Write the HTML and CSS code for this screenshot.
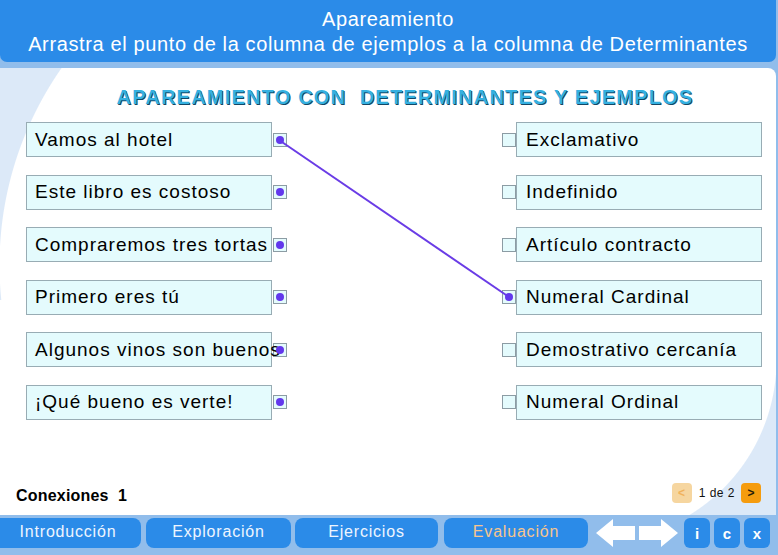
FILE: index.html
```html
<!DOCTYPE html>
<html lang="es">
<head>
<meta charset="utf-8">
<title>Apareamiento</title>
<link rel="stylesheet" href="styles.css">
</head>
<body>
<div class="app">
  <header class="top">
    <div class="top-title">Apareamiento</div>
    <div class="top-sub">Arrastra el punto de la columna de ejemplos a la columna de Determinantes</div>
  </header>

  <main class="panel">
    <h1 class="heading">APAREAMIENTO CON&nbsp; DETERMINANTES Y EJEMPLOS</h1>

    <div class="board">
      <ul class="col col-left">
        <li class="item"><span class="box">Vamos al hotel</span><span class="port"><i class="dot"></i></span></li>
        <li class="item"><span class="box">Este libro es costoso</span><span class="port"><i class="dot"></i></span></li>
        <li class="item"><span class="box">Compraremos tres tortas</span><span class="port"><i class="dot"></i></span></li>
        <li class="item"><span class="box">Primero eres tú</span><span class="port"><i class="dot"></i></span></li>
        <li class="item"><span class="box">Algunos vinos son buenos</span><span class="port"><i class="dot"></i></span></li>
        <li class="item"><span class="box">¡Qué bueno es verte!</span><span class="port"><i class="dot"></i></span></li>
      </ul>
      <ul class="col col-right">
        <li class="item"><span class="port"></span><span class="box">Exclamativo</span></li>
        <li class="item"><span class="port"></span><span class="box">Indefinido</span></li>
        <li class="item"><span class="port"></span><span class="box">Artículo contracto</span></li>
        <li class="item"><span class="port"><i class="dot"></i></span><span class="box">Numeral Cardinal</span></li>
        <li class="item"><span class="port"></span><span class="box">Demostrativo cercanía</span></li>
        <li class="item"><span class="port"></span><span class="box">Numeral Ordinal</span></li>
      </ul>
    </div>

    <svg class="wire" width="776" height="447" viewBox="0 0 776 447">
      <line x1="279" y1="72" x2="509" y2="229" stroke="#6a3ce6" stroke-width="2"/>
    </svg>

    <footer class="status">
      <div class="count">Conexiones&nbsp; 1</div>
      <div class="pager">
        <span class="pg-btn pg-prev">&lt;</span>
        <span class="pg-text">1 de 2</span>
        <span class="pg-btn pg-next">&gt;</span>
      </div>
    </footer>
  </main>

  <nav class="bar">
    <span class="tab tab-1">Introducción</span>
    <span class="tab tab-2">Exploración</span>
    <span class="tab tab-3">Ejercicios</span>
    <span class="tab tab-4 active">Evaluación</span>
    <span class="arrows">
      <svg width="84" height="30" viewBox="0 0 84 30">
        <path d="M1 15 L18 1 L18 8 L40 8 L40 22 L18 22 L18 29 Z" fill="#ffffff"/>
        <path d="M83 15 L66 1 L66 8 L44 8 L44 22 L66 22 L66 29 Z" fill="#ffffff"/>
      </svg>
    </span>
    <span class="sq">i</span>
    <span class="sq">c</span>
    <span class="sq">x</span>
  </nav>
</div>
</body>
</html>
```

FILE: styles.css
```css
* { box-sizing: border-box; }

html, body {
  margin: 0;
  padding: 0;
}

body {
  width: 778px;
  height: 555px;
  overflow: hidden;
  background: #91bdeb;
  font-family: "Liberation Sans", Arial, sans-serif;
}

.app {
  width: 778px;
  height: 555px;
  display: flex;
  flex-direction: column;
}

.top {
  height: 62px;
  width: 776px;
  background: #2b8be8;
  border-radius: 0 0 7px 7px;
  color: #ffffff;
  text-align: center;
  font-size: 20px;
  line-height: 25px;
  letter-spacing: 0.63px;
  padding-top: 7px;
}

.panel {
  position: relative;
  margin-top: 6px;
  width: 776px;
  height: 447px;
  border-radius: 0 8px 0 0;
  background:
    radial-gradient(circle 344px at 343px 197px, #ffffff 343px, #dce9f8 344px) left top / 400px 232px no-repeat,
    radial-gradient(circle 182px at 9px -15px, #ffffff 181px, #dce9f8 182px) right bottom / 190px 140px no-repeat,
    #ffffff;
  display: flex;
  flex-direction: column;
}

.heading {
  margin: 0;
  padding: 17px 0 0 34px;
  text-align: center;
  font-size: 20px;
  line-height: 24px;
  font-weight: bold;
  color: #35b0e0;
  text-shadow: 1px 1px 0 #124866;
  letter-spacing: 1.2px;
}

.board {
  margin-top: 13px;
  display: flex;
  justify-content: space-between;
  padding: 0 14px 0 26px;
}

.col {
  list-style: none;
  margin: 0;
  padding: 0;
  display: flex;
  flex-direction: column;
  gap: 17.6px;
}

.item {
  display: flex;
  align-items: center;
  height: 35px;
}

.box {
  position: relative;
  z-index: 1;
  display: flex;
  align-items: center;
  height: 35px;
  background: #e4fbfd;
  border: 1px solid #98acb4;
  color: #000000;
  font-size: 19px;
  letter-spacing: 1px;
  padding-left: 8px;
  white-space: nowrap;
}

.col-left .box { width: 246px; }
.col-right .box { width: 246px; padding-left: 9px; }

.port {
  width: 14px;
  height: 14px;
  border: 1px solid #8c9ca4;
  background: #e4fbfd;
  display: flex;
  align-items: center;
  justify-content: center;
}

.col-left .port { margin-left: 1px; }

.dot {
  position: relative;
  z-index: 3;
  width: 8px;
  height: 8px;
  border-radius: 50%;
  background: #6238ec;
}

.wire {
  position: absolute;
  left: 0;
  top: 0;
  z-index: 2;
  pointer-events: none;
}

.status {
  margin-top: auto;
  display: flex;
  justify-content: space-between;
  align-items: center;
  padding: 0 15px 10px 16px;
}

.count {
  font-size: 16px;
  font-weight: bold;
  color: #000;
  letter-spacing: 0.2px;
  padding-top: 6px;
}

.pager {
  display: flex;
  align-items: center;
}

.pg-btn {
  width: 20px;
  height: 20px;
  border-radius: 4px;
  display: flex;
  align-items: center;
  justify-content: center;
  font-size: 12px;
  font-weight: bold;
}

.pg-prev { background: #f6d6a0; color: #f1b25c; }
.pg-next { background: #f59c0f; color: #2a1c08; }

.pg-text {
  font-size: 12px;
  color: #111;
  letter-spacing: 0.5px;
  margin: 0 6px 0 7px;
}

.bar {
  flex: 1;
  display: flex;
  align-items: flex-start;
  padding-top: 3px;
}

.tab {
  height: 30px;
  border-radius: 8px;
  background: #2b8be8;
  color: #eef5ff;
  font-size: 16px;
  letter-spacing: 0.8px;
  display: flex;
  align-items: center;
  justify-content: center;
  padding-bottom: 2px;
}

.tab-1 { width: 141px; border-radius: 0 8px 8px 0; padding-right: 5px; }
.tab-2 { width: 145px; margin-left: 5px; }
.tab-3 { width: 143px; margin-left: 4px; }
.tab-4 { width: 144px; margin-left: 6px; }
.tab.active { color: #f7c58e; }

.arrows {
  margin-left: 7px;
  width: 84px;
  height: 30px;
  display: flex;
}

.sq {
  width: 26px;
  height: 30px;
  margin-left: 4px;
  border-radius: 6px;
  background: #2b8be8;
  color: #ffffff;
  font-size: 15px;
  font-weight: bold;
  display: flex;
  align-items: center;
  justify-content: center;
}

.arrows + .sq { margin-left: 5px; }
```
